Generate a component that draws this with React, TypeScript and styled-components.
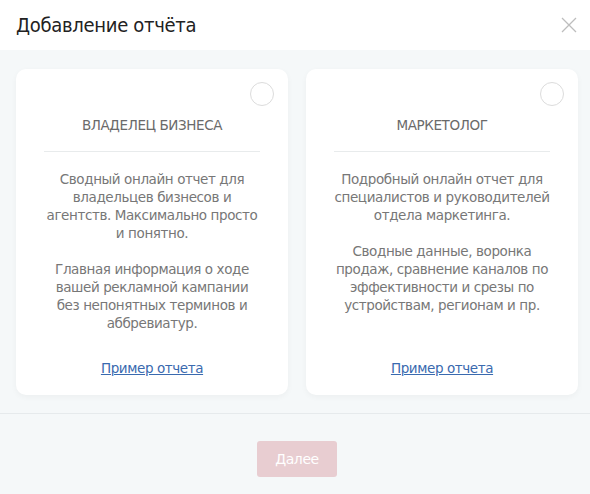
import React from "react";
import styled, { createGlobalStyle } from "styled-components";

const Global = createGlobalStyle`
  html, body { margin: 0; padding: 0; background: #fff; overflow: hidden; }
  body { font-family: "DejaVu Sans", "Liberation Sans", sans-serif; }
  * { box-sizing: border-box; }
`;

const Modal = styled.div`
  width: 594px;
  height: 494px;
  display: flex;
  flex-direction: column;
  background: #f5f8f9;
`;

const Header = styled.div`
  height: 50px;
  background: #fff;
  display: flex;
  align-items: center;
  justify-content: space-between;
  padding: 0 17px 1px 16px;
`;

const Title = styled.h1`
  margin: 0;
  font-family: "DejaVu Sans Condensed", "DejaVu Sans", sans-serif;
  font-stretch: condensed;
  font-size: 20px;
  font-weight: normal;
  color: #222;
  letter-spacing: -0.3px;
`;

const Close = styled.button`
  width: 16px;
  height: 16px;
  padding: 0;
  border: 0;
  background: none;
  display: flex;
`;

const Body = styled.div`
  height: 364px;
  padding: 19px 16px 0 16px;
  display: grid;
  grid-template-columns: 272px 272px;
  column-gap: 18px;
  align-items: start;
  border-bottom: 1px solid #e6eaec;
`;

const Card = styled.div`
  position: relative;
  height: 326px;
  background: #fff;
  border-radius: 10px;
  box-shadow: 0 2px 6px rgba(0, 0, 0, 0.04);
  display: flex;
  flex-direction: column;
  align-items: center;
  padding: 46px 28px 0;
`;

const Radio = styled.span`
  position: absolute;
  top: 13px;
  right: 14px;
  width: 24px;
  height: 24px;
  border-radius: 50%;
  border: 1px solid #dcdcdc;
  background: #fff;
`;

const Role = styled.div`
  font-size: 13.5px;
  color: #6a6a6a;
  line-height: 20px;
  letter-spacing: -0.4px;
  text-transform: uppercase;
  width: 100%;
  text-align: center;
  padding-bottom: 16px;
  border-bottom: 1px solid #e8ebec;
`;

const Text = styled.div`
  margin-top: 18px;
  font-size: 13.5px;
  line-height: 18px;
  color: #777;
  text-align: center;
  letter-spacing: -0.4px;
  flex: 1;
  p { margin: 0 0 18px; }
`;

const Link = styled.a`
  font-size: 13.5px;
  letter-spacing: -0.4px;
  color: #3a6aaf;
  text-decoration: underline;
  margin-bottom: 18px;
  line-height: 18px;
`;

const Footer = styled.div`
  flex: 1;
  display: flex;
  justify-content: center;
  padding-top: 27px;
`;

const NextButton = styled.button`
  width: 80px;
  height: 36px;
  border: 0;
  border-radius: 3px;
  background: #e8cdd1;
  color: #fff;
  font-family: inherit;
  font-size: 14px;
  letter-spacing: -0.4px;
`;

const cards = [
  {
    role: "Владелец бизнеса",
    paras: [
      "Сводный онлайн отчет для владельцев бизнесов и агентств. Максимально просто и понятно.",
      "Главная информация о ходе вашей рекламной кампании без непонятных терминов и аббревиатур.",
    ],
  },
  {
    role: "Маркетолог",
    paras: [
      "Подробный онлайн отчет для специалистов и руководителей отдела маркетинга.",
      "Сводные данные, воронка продаж, сравнение каналов по эффективности и срезы по устройствам, регионам и пр.",
    ],
  },
];

export default function App() {
  return (
    <>
      <Global />
      <Modal>
        <Header>
          <Title>Добавление отчёта</Title>
          <Close aria-label="Закрыть">
            <svg width="16" height="16" viewBox="0 0 16 16">
              <path d="M1 1L15 15M15 1L1 15" stroke="#bdbdbd" strokeWidth="1.3" />
            </svg>
          </Close>
        </Header>
        <Body>
          {cards.map((c) => (
            <Card key={c.role}>
              <Radio />
              <Role>{c.role}</Role>
              <Text>
                {c.paras.map((p) => (
                  <p key={p}>{p}</p>
                ))}
              </Text>
              <Link href="#">Пример отчета</Link>
            </Card>
          ))}
        </Body>
        <Footer>
          <NextButton>Далее</NextButton>
        </Footer>
      </Modal>
    </>
  );
}
